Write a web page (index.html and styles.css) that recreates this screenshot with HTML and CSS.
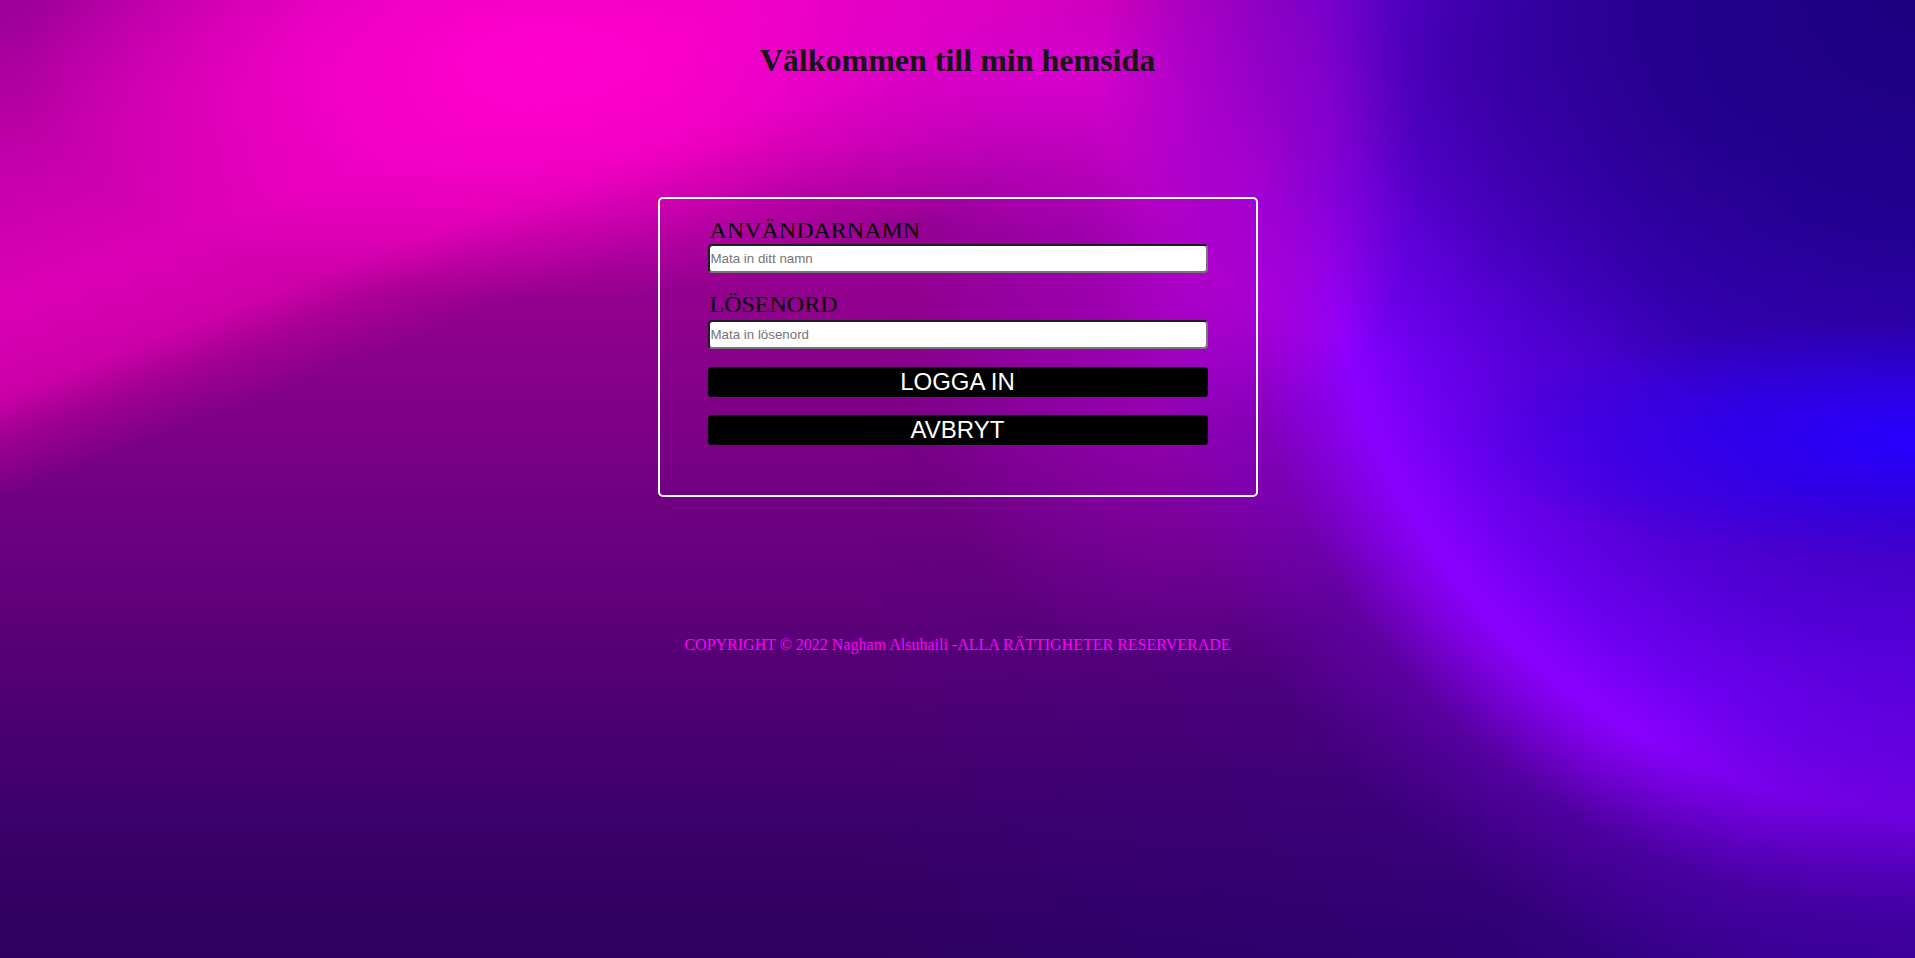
FILE: index.html
```html
<!DOCTYPE html>
<html lang="sv">
<head>
<meta charset="utf-8">
<title>Välkommen</title>
<link rel="stylesheet" href="styles.css">
</head>
<body>
<div class="page">
  <h1 class="title">Välkommen till min hemsida</h1>
  <form class="login">
    <div class="field">
      <label class="label" for="user">ANVÄNDARNAMN</label>
      <input class="input" id="user" type="text" placeholder="Mata in ditt namn">
    </div>
    <div class="field field-second">
      <label class="label" for="pass">LÖSENORD</label>
      <input class="input" id="pass" type="password" placeholder="Mata in lösenord">
    </div>
    <button class="btn btn-login" type="button">LOGGA IN</button>
    <button class="btn btn-cancel" type="button">AVBRYT</button>
  </form>
  <p class="footer">COPYRIGHT © 2022 Nagham Alsuhaili -ALLA RÄTTIGHETER RESERVERADE</p>
</div>
</body>
</html>
```
FILE: styles.css
```css
html, body {
  margin: 0;
  padding: 0;
  height: 100%;
}
body {
  font-family: "Liberation Serif", "Times New Roman", serif;
  background-color: #3a0070;
  background-image:
    /* calmer bottom-right corner */
    radial-gradient(ellipse 420px 300px at 1915px 958px, rgba(58,0,160,.65) 0%, rgba(58,0,160,0) 100%),
    /* blue streak on the right edge */
    radial-gradient(ellipse 460px 120px at 1915px 440px, rgba(40,0,255,1) 0%, rgba(40,0,255,.6) 45%, rgba(40,0,255,0) 100%),
    /* dark blue top-right corner */
    radial-gradient(ellipse 600px 420px at 1915px 0px, rgba(28,0,128,1) 0%, rgba(28,0,128,.75) 45%, rgba(28,0,128,0) 100%),
    /* calmer upper part of the violet disk */
    radial-gradient(ellipse 380px 300px at 1480px 60px, rgba(70,0,175,.7) 0%, rgba(70,0,175,.4) 55%, rgba(70,0,175,0) 100%),
    /* magenta glow at top of arc */
    radial-gradient(ellipse 170px 260px at 1250px 160px, rgba(210,0,222,.8) 0%, rgba(210,0,222,.4) 55%, rgba(210,0,222,0) 100%),
    radial-gradient(ellipse 380px 170px at 1060px 70px, rgba(225,0,212,.9) 0%, rgba(225,0,212,.5) 50%, rgba(225,0,212,0) 100%),
    /* violet disk with glowing edge */
    radial-gradient(circle at 1953px 193px, #2e00b0 0px, #3a00bc 300px, #5200d6 450px, #6e00f0 560px, #8a00ff 625px, rgba(138,0,250,.8) 660px, rgba(120,0,220,.35) 730px, rgba(100,0,190,0) 840px),
    /* magenta-violet haze right of the box */
    radial-gradient(ellipse 280px 340px at 1180px 330px, rgba(185,0,215,.6) 0%, rgba(185,0,215,0) 100%),
    /* hot pink peak */
    radial-gradient(ellipse 520px 240px at 540px 60px, rgba(255,0,205,1) 0%, rgba(255,0,205,.7) 45%, rgba(255,0,205,0) 100%),
    /* pink diagonal band with soft edge */
    linear-gradient(159deg, rgba(225,0,185,0) 0%, rgba(225,0,185,.55) 9%, rgba(232,0,188,.85) 18%, rgba(218,0,174,.82) 23.5%, rgba(200,0,160,.45) 26%, rgba(190,0,150,0) 29.5%),
    /* bluish tint bottom right */
    linear-gradient(90deg, rgba(50,0,170,0) 45%, rgba(50,0,170,.45) 100%),
    linear-gradient(180deg, #9a0098 0%, #94008f 30%, #7c0086 45%, #5c0078 65%, #3c006a 85%, #2d0060 100%);
  background-repeat: no-repeat;
  overflow: hidden;
}
.page {
  display: flex;
  flex-direction: column;
  align-items: center;
  padding-top: 42px;
}
.title {
  margin: 0;
  font-size: 32px;
  line-height: 37px;
  font-weight: bold;
  color: #161616;
}
.login {
  box-sizing: border-box;
  width: 600px;
  margin-top: 118px;
  border: 2px solid #ffffff;
  border-radius: 5px;
  padding: 17px 48px 50px;
  display: flex;
  flex-direction: column;
}
.field {
  display: flex;
  flex-direction: column;
}
.field-second {
  margin-top: 17px;
}
.field-second .input {
  margin-top: 2px;
}
.label {
  display: block;
  font-size: 24px;
  line-height: 28px;
  color: #000;
  padding-left: 2px;
}
.input {
  box-sizing: border-box;
  width: 500px;
  height: 29px;
  margin: 0;
  padding: 0 1px;
  font-family: "Liberation Sans", Arial, sans-serif;
  font-size: 13.333px;
  color: #000;
  background: #fff;
  border-width: 2px;
  border-style: solid;
  border-color: #1e1e1e #767676 #767676 #1e1e1e;
  border-radius: 4px;
  outline: none;
}
.input::placeholder {
  color: #757575;
}
.btn {
  box-sizing: border-box;
  width: 500px;
  height: 30px;
  padding: 0;
  border: none;
  border-radius: 4px;
  background: #000;
  color: #fff;
  font-family: "Liberation Sans", Arial, sans-serif;
  font-size: 24px;
  line-height: 30px;
  cursor: pointer;
}
.btn-login {
  margin-top: 18px;
}
.btn-cancel {
  margin-top: 18px;
}
.footer {
  margin: 139px 0 0;
  font-size: 16px;
  line-height: 18px;
  color: #ff00ff;
}
```
